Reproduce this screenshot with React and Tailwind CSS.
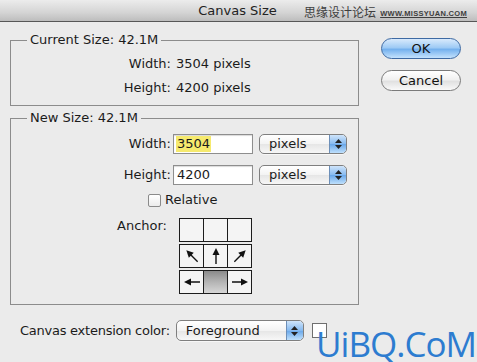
const Arrow = ({ rotate }) => (
  <svg width="20" height="20" viewBox="0 0 20 20" style={{ transform: `rotate(${rotate}deg)` }}>
    <line x1="10" y1="18" x2="10" y2="6" stroke="#111" strokeWidth="1.4" />
    <polygon points="10,2 6.5,9 13.5,9" fill="#111" />
  </svg>
);

const Stepper = () => (
  <div className="flex h-full w-[17px] flex-col items-center justify-center gap-[2px] rounded-r-[4px] border-l border-[#6d8fb8] bg-[linear-gradient(to_bottom,#cfe4fa,#86baf0_50%,#6aa8ea_52%,#bfe0fc)]">
    <svg width="7" height="4" viewBox="0 0 7 4"><polygon points="3.5,0 7,4 0,4" fill="#222" /></svg>
    <svg width="7" height="4" viewBox="0 0 7 4"><polygon points="0,0 7,0 3.5,4" fill="#222" /></svg>
  </div>
);

const Select = ({ label, width, height }) => (
  <div className={`flex ${width} ${height} items-stretch overflow-hidden rounded-[5px] border border-[#7f7f7f] bg-[linear-gradient(to_bottom,#ffffff,#f3f3f3_50%,#e6e6e6_52%,#f7f7f7)] shadow-[0_1px_0_rgba(255,255,255,0.6)]`}>
    <span className="flex flex-1 items-center pl-[9px]">{label}</span>
    <Stepper />
  </div>
);

const Group = ({ title, className, children }) => (
  <div className={`relative border border-[#8c8c8c] ${className}`}>
    <span className="absolute -top-[9px] left-[16px] bg-[#ebebeb] px-[3px] leading-[16px]">{title}</span>
    {children}
  </div>
);

const Cell = ({ children, selected }) => (
  <div
    className={`-ml-px flex h-[24px] w-[25px] items-center justify-center border border-[#1c1c1c] first:ml-0 ${
      selected ? "bg-[linear-gradient(to_bottom,#8a8a8a,#b4b4b4_50%,#d6d6d6)]" : "bg-[#f4f4f4]"
    }`}
  >
    {children}
  </div>
);

export default function App() {
  return (
    <div className="relative h-[362px] w-[477px] overflow-hidden bg-[#ebebeb] font-['DejaVu_Sans',sans-serif] text-[13px] text-[#1b1b1b]">
      <div className="relative flex h-[22px] items-center justify-center border-b border-[#575757] bg-[linear-gradient(to_bottom,#ececec,#d4d4d4_60%,#bdbdbd)]">
        <span className="ml-[-2px] text-[13px] text-[#222]">Canvas Size</span>
        <div className="absolute right-[10px] top-[5px] flex items-end gap-[4px] text-[#3e3e3e]">
          <span className="font-['Noto_Sans_CJK_SC',sans-serif] text-[12px] leading-[14px]">思缘设计论坛</span>
          <span className="font-['Liberation_Sans',sans-serif] text-[7.5px] font-bold leading-[10px] tracking-[0.3px] underline">WWW.MISSYUAN.COM</span>
        </div>
      </div>

      <div className="flex pl-[10px] pt-[18px]">
        <div className="w-[349px]">
          <Group title="Current Size: 42.1M" className="h-[66px] pt-[11px]">
            <div className="flex h-[24px] items-center">
              <span className="w-[160px] text-right">Width:</span>
              <span className="ml-[5px]">3504 pixels</span>
            </div>
            <div className="flex h-[24px] items-center">
              <span className="w-[160px] text-right">Height:</span>
              <span className="ml-[5px]">4200 pixels</span>
            </div>
          </Group>

          <Group title="New Size: 42.1M" className="mt-[12px] h-[187px] pt-[15px]">
            <div className="flex h-[20px] items-center">
              <span className="w-[160px] text-right">Width:</span>
              <div className="ml-[2px] flex h-[20px] w-[80px] items-center border border-[#8e8e8e] bg-white pl-[2px] shadow-[inset_0_1px_1px_rgba(0,0,0,0.15)]">
                <span className="bg-[#f6ea6e] px-[1px] leading-[16px]">3504</span>
              </div>
              <div className="ml-[6px]">
                <Select label="pixels" width="w-[88px]" height="h-[20px]" />
              </div>
            </div>
            <div className="mt-[11px] flex h-[20px] items-center">
              <span className="w-[160px] text-right">Height:</span>
              <div className="ml-[2px] flex h-[20px] w-[80px] items-center border border-[#8e8e8e] bg-white pl-[3px] shadow-[inset_0_1px_1px_rgba(0,0,0,0.15)]">
                4200
              </div>
              <div className="ml-[6px]">
                <Select label="pixels" width="w-[88px]" height="h-[20px]" />
              </div>
            </div>
            <div className="mt-[8px] flex h-[14px] items-center pl-[137px]">
              <div className="h-[13px] w-[13px] rounded-[2px] border border-[#8a8a8a] bg-[linear-gradient(to_bottom,#ffffff,#ececec)]" />
              <span className="ml-[4px]">Relative</span>
            </div>
            <div className="mt-[11px] flex items-start">
              <span className="w-[156px] text-right leading-[16px]">Anchor:</span>
              <div className="ml-[12px] flex flex-col gap-[2px]">
                <div className="flex">
                  <Cell />
                  <Cell />
                  <Cell />
                </div>
                <div className="flex">
                  <Cell><Arrow rotate={-45} /></Cell>
                  <Cell><Arrow rotate={0} /></Cell>
                  <Cell><Arrow rotate={45} /></Cell>
                </div>
                <div className="flex">
                  <Cell><Arrow rotate={-90} /></Cell>
                  <Cell selected />
                  <Cell><Arrow rotate={90} /></Cell>
                </div>
              </div>
            </div>
          </Group>
        </div>

        <div className="ml-[22px] mt-[-2px] flex flex-col gap-[11px]">
          <button className="flex h-[21px] w-[80px] items-center justify-center rounded-full border border-[#3e6aa3] bg-[linear-gradient(to_bottom,#d9eafc,#9fcbf5_45%,#75b1ee_55%,#c4e2fd)] text-[13px] text-[#111]">
            OK
          </button>
          <button className="flex h-[21px] w-[80px] items-center justify-center rounded-full border border-[#7a7a7a] bg-[linear-gradient(to_bottom,#ffffff,#f1f1f1_45%,#e1e1e1_55%,#f9f9f9)] text-[13px] text-[#111]">
            Cancel
          </button>
        </div>
      </div>

      <div className="mt-[15px] flex items-center pl-[20px]">
        <span className="tracking-[-0.25px]">Canvas extension color:</span>
        <div className="ml-[6px]">
          <Select label="Foreground" width="w-[128px]" height="h-[21px]" />
        </div>
        <div className="ml-[8px] h-[15px] w-[15px] border border-[#6f6f6f] bg-white" />
      </div>

      <span className="absolute bottom-0 right-[1px] font-['Open_Sans',sans-serif] text-[35px] leading-[36px] tracking-[-1px] text-[#2d7cd0]">
        UiBQ.CoM
      </span>
    </div>
  );
}
